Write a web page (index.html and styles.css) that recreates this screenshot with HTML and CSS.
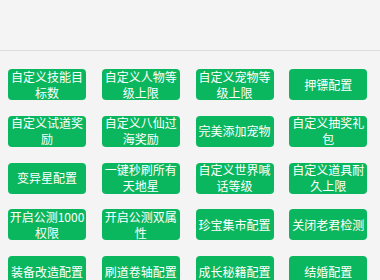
FILE: index.html
```html
<!DOCTYPE html>
<html lang="zh-CN">
<head>
    <meta charset="UTF-8">
    <meta name="viewport" content="width=device-width, initial-scale=1.0">
    <title>功能配置</title>
    <link rel="stylesheet" href="styles.css">
</head>
<body>
    <header class="top-bar"></header>

    <div class="btn-grid">
        <div class="cell"><button class="btn">自定义技能目标数</button></div>
        <div class="cell"><button class="btn">自定义人物等级上限</button></div>
        <div class="cell"><button class="btn">自定义宠物等级上限</button></div>
        <div class="cell"><button class="btn">押镖配置</button></div>

        <div class="cell"><button class="btn">自定义试道奖励</button></div>
        <div class="cell"><button class="btn">自定义八仙过海奖励</button></div>
        <div class="cell"><button class="btn">完美添加宠物</button></div>
        <div class="cell"><button class="btn">自定义抽奖礼包</button></div>

        <div class="cell"><button class="btn">变异星配置</button></div>
        <div class="cell"><button class="btn">一键秒刷所有天地星</button></div>
        <div class="cell"><button class="btn">自定义世界喊话等级</button></div>
        <div class="cell"><button class="btn">自定义道具耐久上限</button></div>

        <div class="cell"><button class="btn">开启公测1000权限</button></div>
        <div class="cell"><button class="btn">开启公测双属性</button></div>
        <div class="cell"><button class="btn">珍宝集市配置</button></div>
        <div class="cell"><button class="btn">关闭老君检测</button></div>

        <div class="cell"><button class="btn">装备改造配置</button></div>
        <div class="cell"><button class="btn">刷道卷轴配置</button></div>
        <div class="cell"><button class="btn">成长秘籍配置</button></div>
        <div class="cell"><button class="btn">结婚配置</button></div>
    </div>
</body>
</html>
```

FILE: styles.css
```css
body {
    margin: 0;
    padding: 0;
    background-color: #f4f4f4;
    font-family: "Noto Sans CJK SC", "Noto Sans", sans-serif;
}

.top-bar {
    height: 50px;
    border-bottom: 1px solid #dcdcdc;
}

.btn-grid {
    width: 375px;
    display: grid;
    grid-template-columns: repeat(4, 1fr);
    row-gap: 15.75px;
    padding-top: 18px;
}

.cell {
    padding-left: 8px;
}

.btn {
    display: flex;
    align-items: center;
    justify-content: center;
    width: 78px;
    height: 31px;
    padding: 0;
    border: none;
    border-radius: 4px;
    background-color: #0bb75e;
    color: white;
    font-family: inherit;
    font-size: 12px;
    line-height: 16px;
    text-align: center;
    cursor: pointer;
}
```
